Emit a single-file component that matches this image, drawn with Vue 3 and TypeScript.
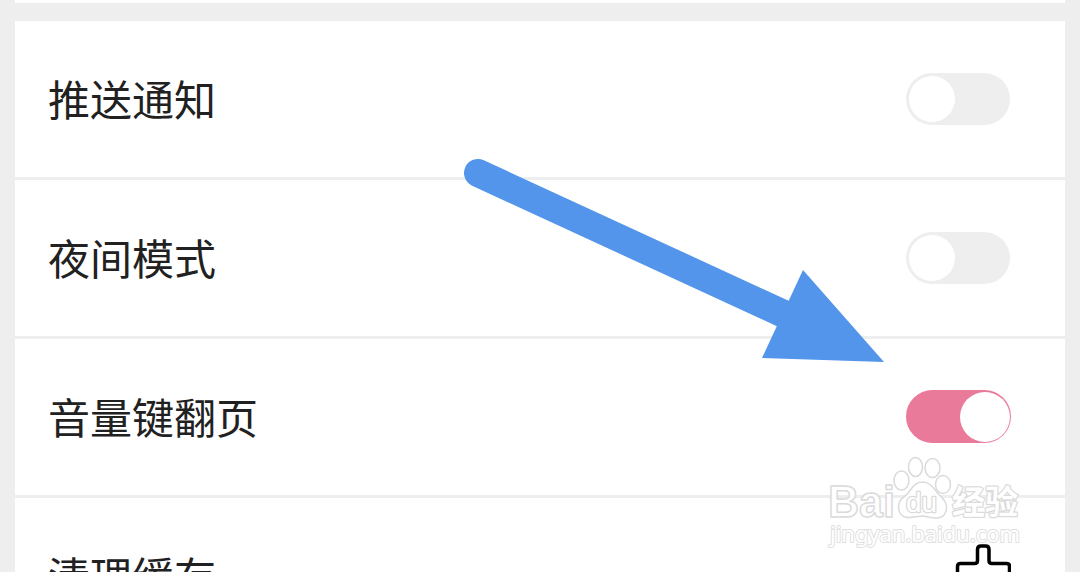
<script setup lang="ts">
import { ref } from 'vue'

interface Setting {
  label: string
  on?: boolean
}

const settings = ref<Setting[]>([
  { label: '推送通知', on: false },
  { label: '夜间模式', on: false },
  { label: '音量键翻页', on: true },
  { label: '清理缓存' },
])

function toggle(item: Setting) {
  item.on = !item.on
}
</script>

<template>
  <main class="screen">
    <section class="previous"></section>
    <section class="card">
      <div v-for="item in settings" :key="item.label" class="row">
        <span class="label">{{ item.label }}</span>
        <button
          v-if="item.on !== undefined"
          class="switch"
          :class="{ on: item.on }"
          role="switch"
          :aria-checked="item.on"
          :aria-label="item.label"
          @click="toggle(item)"
        >
          <span class="knob"></span>
        </button>
        <svg v-else class="broom" width="58" height="64" viewBox="0 0 58 64">
          <path
            d="M4.500 42V22.500Q4.500 19.500 7.500 19.500H21.500Q24.500 19.500 24.500 16.500V5.500Q24.500 2 28 2H32.500Q36 2 36 5.500V16.500Q36 19.500 39 19.500H53.500Q56.500 19.500 56.500 22.500V42Z"
          />
        </svg>
      </div>
    </section>

    <svg class="overlay" viewBox="0 0 1080 572">
      <line class="shaft" x1="478" y1="173" x2="786" y2="315" />
      <polygon class="head" points="803,270 884,362 762,358" />
      <g class="mark">
        <text class="brand" x="828" y="516.500" textLength="67" lengthAdjust="spacingAndGlyphs">Bai</text>
        <ellipse cx="901.500" cy="480.500" rx="7.500" ry="9.500" />
        <ellipse cx="915.500" cy="467" rx="7" ry="9.500" />
        <ellipse cx="932.500" cy="468" rx="7.500" ry="9.500" />
        <ellipse cx="943" cy="484.500" rx="7.500" ry="9" />
        <path
          d="M922.500 482C915 482 912 488 908 493C904 498 898.500 499 898.500 507C898.500 514 903 517.500 909 517.500C914 517.500 918 516 922.500 516C927 516 931 518.500 937 518C943 517.500 946.500 514 946.500 507C946.500 499 940 497 936 491C932 486 929 482 922.500 482Z"
        />
        <text class="du" x="906" y="512" textLength="31" lengthAdjust="spacingAndGlyphs">du</text>
        <text class="cn" x="952" y="514" textLength="66" lengthAdjust="spacingAndGlyphs">经验</text>
        <text class="site" x="830" y="542" textLength="190" lengthAdjust="spacingAndGlyphs">jingyan.baidu.com</text>
      </g>
    </svg>
  </main>
</template>

<style>
body {
  margin: 0;
  overflow: hidden;
}
</style>

<style scoped>
.screen {
  position: relative;
  box-sizing: border-box;
  width: 1080px;
  height: 572px;
  padding: 0 15px;
  overflow: hidden;
  background: #eee;
  font-family: "Noto Sans CJK SC", sans-serif;
}

.previous {
  height: 3px;
  margin-bottom: 18px;
  background: #fff;
}

.card {
  background: #fff;
}

.row {
  display: flex;
  align-items: center;
  justify-content: space-between;
  box-sizing: border-box;
  height: 159px;
  padding: 0 54px 0 33px;
  border-bottom: 3px solid #eee;
}

.label {
  margin-bottom: 3px;
  color: #212121;
  font-size: 42px;
  line-height: 61px;
}

.switch {
  display: flex;
  align-items: center;
  box-sizing: border-box;
  width: 104px;
  height: 52px;
  margin: 0 1px 1px 0;
  padding: 0 3px;
  border: 0;
  border-radius: 26px;
  background: #eee;
}

.switch.on {
  justify-content: flex-end;
  width: 105px;
  height: 53px;
  margin: 0 0 1px;
  padding: 0 1px;
  border-radius: 27px;
  background: #ea7a99;
}

.knob {
  width: 46px;
  height: 46px;
  border-radius: 50%;
  background: #fff;
}

.on .knob {
  width: 50px;
  height: 50px;
}

.broom {
  fill: none;
  stroke: #000;
  stroke-width: 3.500;
}

.overlay {
  position: absolute;
  inset: 0;
  width: 1080px;
  height: 572px;
  pointer-events: none;
}

.shaft {
  stroke: #5295ea;
  stroke-width: 28;
  stroke-linecap: round;
}

.head {
  fill: #5295ea;
}

.mark {
  fill: #fff;
  stroke: #dadada;
  stroke-width: 1.500;
  stroke-linejoin: round;
}

.mark text {
  paint-order: stroke;
  stroke-width: 2.500;
}

.brand {
  font: bold 45px "Liberation Sans", sans-serif;
}

.mark .brand {
  paint-order: normal;
  stroke-width: 1.500;
}

.mark .du {
  font: 27px "Liberation Sans", sans-serif;
}

.cn {
  font: bold 33px "Noto Sans CJK SC", sans-serif;
}

.mark .site {
  font: 22px "Noto Sans", sans-serif;
  stroke: #e0e0e0;
  stroke-width: 2;
}
</style>
